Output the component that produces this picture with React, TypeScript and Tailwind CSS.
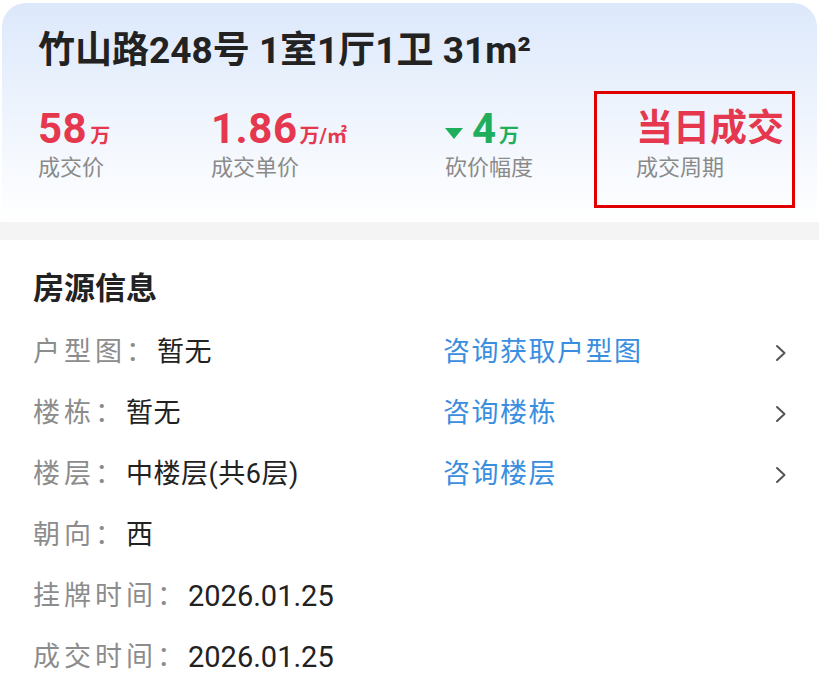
import React from "react";

const FONT = "Roboto, 'Noto Sans CJK SC', sans-serif";

function Chevron() {
  return (
    <svg width="12" height="18" viewBox="0 0 12 18" fill="none">
      <path d="M2 2 L9.5 9 L2 16" stroke="#555" strokeWidth="2" strokeLinecap="round" strokeLinejoin="round" />
    </svg>
  );
}

function Row({ label, value, link, mono }: { label: string; value: string; link?: string; mono?: boolean }) {
  return (
    <div className="flex h-[61px] items-center">
      <div className="flex w-[410px] items-center">
        <span className="text-[27px] leading-none tracking-[4px] text-[#8c8c8c]">{label}</span>
        <span className={`leading-none text-[#222] ${mono ? "text-[29px]" : "text-[27px] tracking-[0.5px]"}`}>{value}</span>
      </div>
      {link ? (
        <>
          <span className="flex-1 text-[27px] leading-none tracking-[1.5px] text-[#3a8ee0]">{link}</span>
          <Chevron />
        </>
      ) : null}
    </div>
  );
}

export default function App() {
  return (
    <div className="relative h-[682px] w-[819px] overflow-hidden bg-white" style={{ fontFamily: FONT }}>
      {/* header card */}
      <div className="mx-[2px] mt-[3px] h-[219px] rounded-t-[24px] bg-gradient-to-b from-[#dce8fb] via-[#eef4fd] to-white pl-[36px] pt-[26px]">
        <div className="text-[37px] font-bold leading-[44px] text-[#222]">
          竹山路248号 1室1厅1卫 31m²
        </div>
        <div className="mt-[34px] flex">
          <div className="flex w-[173px] flex-col">
            <div className="flex h-[44px] items-baseline text-[#e5384f]">
              <span className="text-[42px] font-bold leading-[44px] tracking-[0.5px]">58</span>
              <span className="ml-[3px] text-[20px] font-bold leading-none">万</span>
            </div>
            <div className="mt-[6px] text-[22px] leading-[22px] text-[#8a8a8a]">成交价</div>
          </div>
          <div className="flex w-[234px] flex-col">
            <div className="flex h-[44px] items-baseline text-[#e5384f]">
              <span className="text-[42px] font-bold leading-[44px] tracking-[0.5px]">1.86</span>
              <span className="ml-[2px] text-[20px] font-bold leading-none">万/㎡</span>
            </div>
            <div className="mt-[6px] text-[22px] leading-[22px] text-[#8a8a8a]">成交单价</div>
          </div>
          <div className="flex w-[191px] flex-col">
            <div className="flex h-[44px] items-baseline text-[#1fae5c]">
              <svg width="18" height="11" viewBox="0 0 18 11" className="mr-[9px] mt-[8px] self-center">
                <path d="M0 0 H18 L9 11 Z" fill="#1fae5c" />
              </svg>
              <span className="text-[42px] font-bold leading-[44px]">4</span>
              <span className="ml-[3px] text-[20px] font-bold leading-none">万</span>
            </div>
            <div className="mt-[6px] text-[22px] leading-[22px] text-[#8a8a8a]">砍价幅度</div>
          </div>
          <div className="flex flex-col">
            <div className="h-[44px] text-[37px] font-bold leading-[44px] text-[#e5384f]">当日成交</div>
            <div className="mt-[6px] text-[22px] leading-[22px] text-[#8a8a8a]">成交周期</div>
          </div>
        </div>
      </div>

      {/* annotation box */}
      <div className="absolute left-[594px] top-[91px] h-[117px] w-[201px] border-[3px] border-[#e10000]" />

      {/* gray divider */}
      <div className="h-[18px] bg-[#f4f4f4]" />

      {/* info section */}
      <div className="pl-[33px] pr-[32px] pt-[33px]">
        <div className="text-[31px] font-bold leading-[31px] text-[#222]">房源信息</div>
        <div className="mt-[18px] flex flex-col">
          <Row label="户型图：" value="暂无" link="咨询获取户型图" />
          <Row label="楼栋：" value="暂无" link="咨询楼栋" />
          <Row label="楼层：" value="中楼层(共6层)" link="咨询楼层" />
          <Row label="朝向：" value="西" />
          <Row label="挂牌时间：" value="2026.01.25" mono />
          <Row label="成交时间：" value="2026.01.25" mono />
        </div>
      </div>
    </div>
  );
}
